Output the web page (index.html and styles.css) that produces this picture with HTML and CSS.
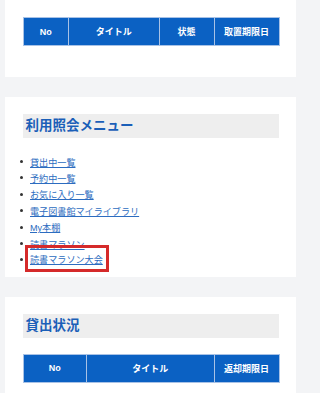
FILE: index.html
```html
<!DOCTYPE html>
<html lang="ja">
<head>
<meta charset="utf-8">
<title>利用照会</title>
<link rel="stylesheet" href="styles.css">
</head>
<body>
<div class="page">
  <section class="card card-top">
    <table class="grid">
      <colgroup><col style="width:45.5px"><col style="width:90.5px"><col style="width:55px"><col style="width:65px"></colgroup>
      <thead><tr><th>No</th><th>タイトル</th><th>状態</th><th>取置期限日</th></tr></thead>
    </table>
  </section>
  <section class="card card-menu">
    <h2 class="heading">利用照会メニュー</h2>
    <ul class="menu">
      <li><a href="#">貸出中一覧</a></li>
      <li><a href="#">予約中一覧</a></li>
      <li><a href="#">お気に入り一覧</a></li>
      <li><a href="#">電子図書館マイライブラリ</a></li>
      <li><a href="#">My本棚</a></li>
      <li><a href="#">読書マラソン</a></li>
      <li><span class="marked"><a href="#">読書マラソン大会</a></span></li>
    </ul>
  </section>
  <section class="card card-loan">
    <h2 class="heading">貸出状況</h2>
    <table class="grid">
      <colgroup><col style="width:63.5px"><col style="width:127.5px"><col style="width:65px"></colgroup>
      <thead><tr><th>No</th><th>タイトル</th><th>返却期限日</th></tr></thead>
    </table>
  </section>
</div>
</body>
</html>
```
FILE: styles.css
```css
html, body {
  margin: 0;
  padding: 0;
  background: #f3f4f6;
  font-family: "Liberation Sans", "Noto Sans CJK JP", sans-serif;
}
.page {
  width: 291px;
  margin: 0 0 0 5px;
  display: flex;
  flex-direction: column;
  gap: 19.5px;
}
.card {
  background: #ffffff;
  padding: 17px 17.5px 0;
}
.card-top { padding-bottom: 31px; }
.card-menu { padding-bottom: 9px; }
.card-loan { padding-bottom: 20px; }
.grid {
  width: 256px;
  table-layout: fixed;
  border-collapse: collapse;
}
.grid th {
  background: #0b61c3;
  color: #ffffff;
  font-size: 9px;
  font-weight: bold;
  height: 27px;
  padding: 0;
  text-align: center;
  border: 1px solid #a8c2e6;
}
.heading {
  margin: 0 0 15.5px;
  height: 24.4px;
  line-height: 24.4px;
  background: #eeeeee;
  color: #1b5fb8;
  font-size: 13.5px;
  font-weight: bold;
  padding-left: 3px;
}
.menu {
  list-style: none;
  margin: 0 0 0 -3px;
  padding: 0;
}
.menu li {
  display: flex;
  align-items: center;
  height: 16.4px;
  font-size: 9.1px;
}
.menu li::before {
  content: "";
  width: 3px;
  height: 3px;
  border-radius: 50%;
  background: #333333;
  margin-right: 7.5px;
  flex: none;
}
.menu a {
  color: #2c6cc0;
  text-decoration: underline;
}
.marked {
  position: relative;
  display: inline-block;
  line-height: 16.4px;
}
.marked::after {
  content: "";
  position: absolute;
  left: -5.3px;
  right: -6.6px;
  top: -6.8px;
  bottom: -4px;
  border: 3px solid #d52a2a;
}
```
